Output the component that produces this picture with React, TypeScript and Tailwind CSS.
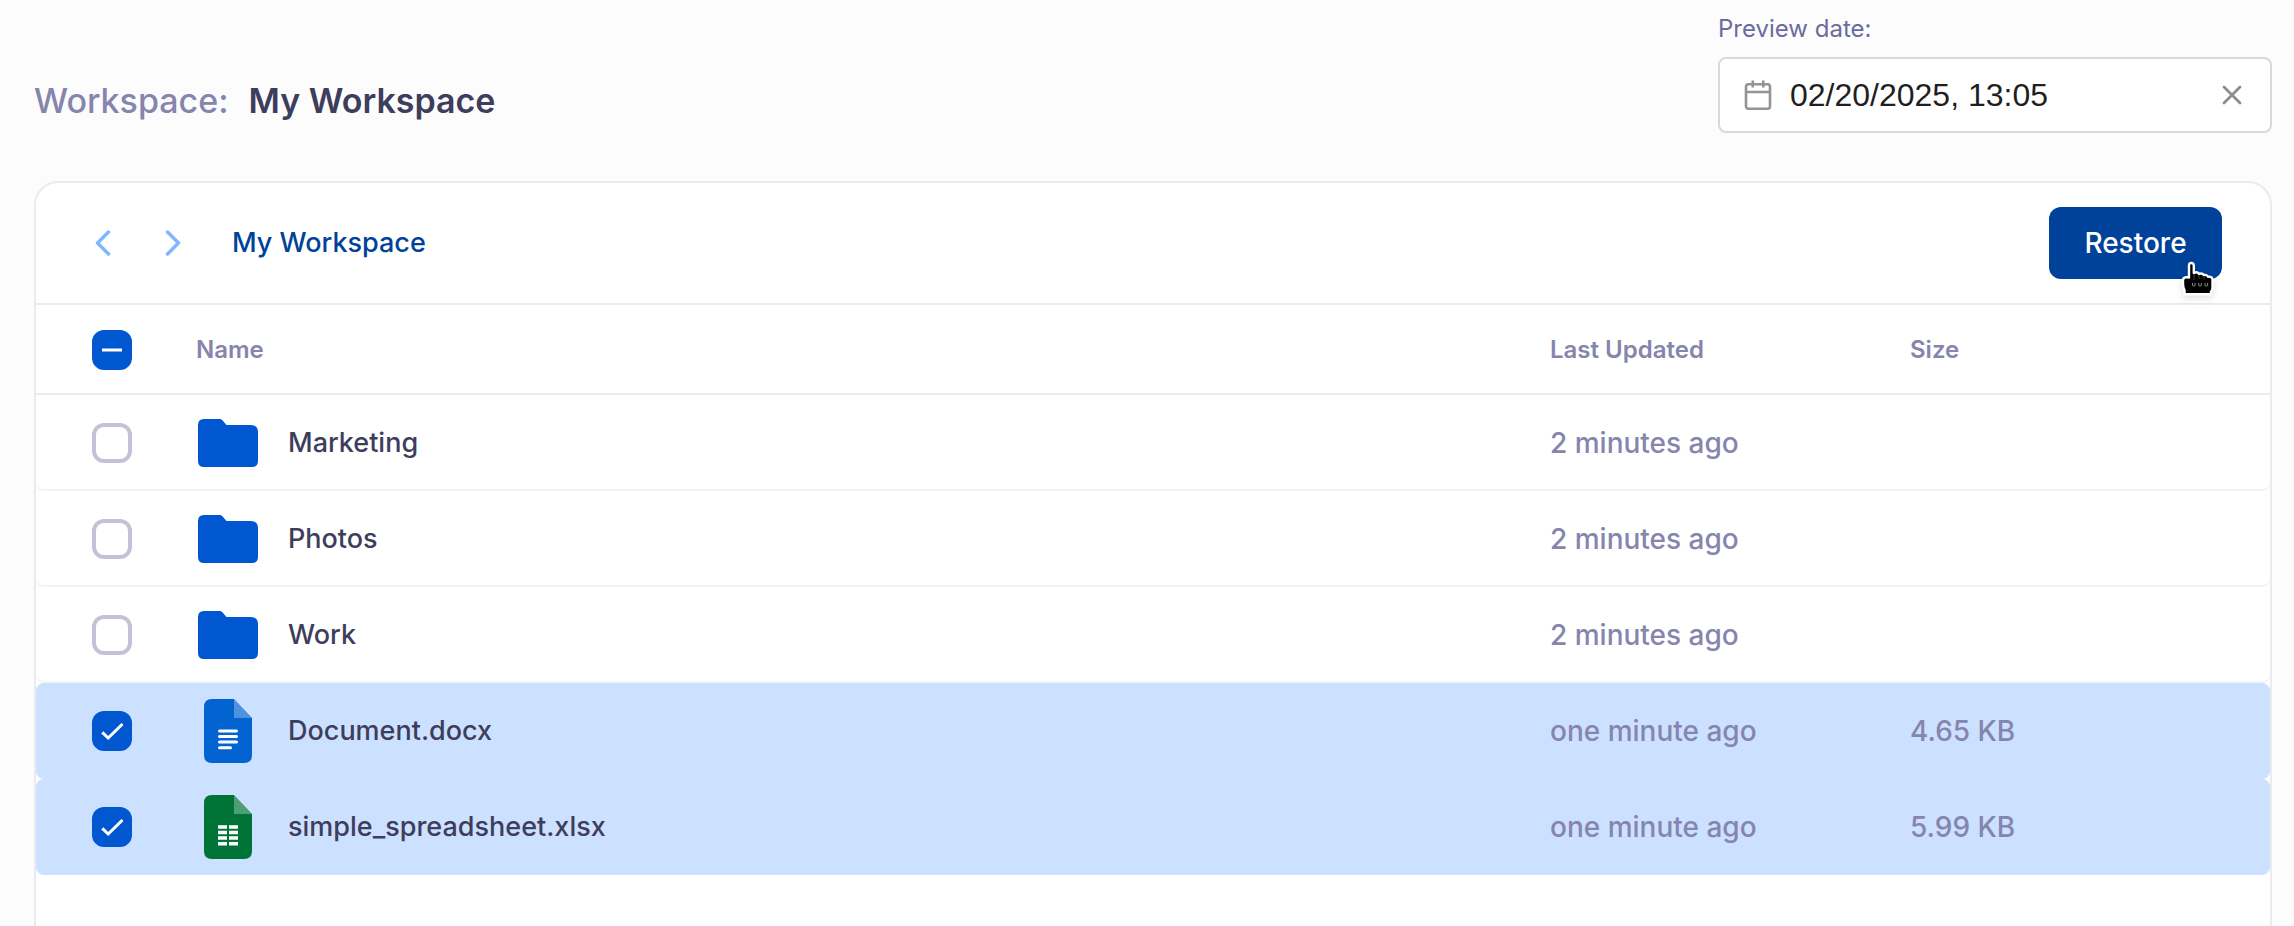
import { useEffect, useRef, useState } from 'react';

type Kind = 'folder' | 'doc' | 'sheet';

interface Entry {
  name: string;
  kind: Kind;
  updated: string;
  size: string;
}

const entries: Entry[] = [
  { name: 'Marketing', kind: 'folder', updated: '2 minutes ago', size: '' },
  { name: 'Photos', kind: 'folder', updated: '2 minutes ago', size: '' },
  { name: 'Work', kind: 'folder', updated: '2 minutes ago', size: '' },
  { name: 'Document.docx', kind: 'doc', updated: 'one minute ago', size: '4.65 KB' },
  { name: 'simple_spreadsheet.xlsx', kind: 'sheet', updated: 'one minute ago', size: '5.99 KB' },
];

function FolderIcon() {
  return (
    <svg viewBox="0 0 64 64" className="size-16 shrink-0" aria-hidden="true">
      <path
        d="M8 8h15c2 0 3 .5 4.300 2.200L30.500 14H55q7 0 7 7v29q0 6-6 6H8q-6 0-6-6V14q0-6 6-6z"
        fill="#0057cf"
      />
    </svg>
  );
}

function FileIcon({ kind }: { kind: 'doc' | 'sheet' }) {
  return (
    <svg viewBox="0 0 64 64" className="size-16 shrink-0" aria-hidden="true">
      <path
        d="M16 0h22l18 19v37q0 8-8 8H16q-8 0-8-8V8q0-8 8-8z"
        fill={kind === 'doc' ? '#0263d1' : '#007437'}
      />
      <path d="M38 0l18 19H38z" fill="#fff" fillOpacity=".3" />
      {kind === 'doc' ? (
        <path
          d="M23.500 32h17M23.500 37.500h17M23.500 43h17M23.500 48.700h11"
          stroke="#fff"
          strokeWidth="3"
          strokeLinecap="round"
        />
      ) : (
        <path
          d="M22 32h9M22 37.500h9M22 43h9M22 48.700h9M33 32h9M33 37.500h9M33 43h9M33 48.700h9"
          stroke="#fff"
          strokeWidth="3.400"
        />
      )}
    </svg>
  );
}

interface CheckboxProps {
  label: string;
  checked: boolean;
  mixed?: boolean;
  onChange: () => void;
}

function Checkbox({ label, checked, mixed = false, onChange }: CheckboxProps) {
  const ref = useRef<HTMLInputElement>(null);
  useEffect(() => {
    if (ref.current) ref.current.indeterminate = mixed;
  }, [mixed]);

  return (
    <div className="grid size-10">
      <input
        ref={ref}
        type="checkbox"
        aria-label={label}
        checked={checked}
        onChange={onChange}
        className="col-start-1 row-start-1 size-10 appearance-none rounded-xl border-4 border-[#c2c2d9] bg-white checked:border-[#0057cf] checked:bg-[#0057cf] indeterminate:border-[#0057cf] indeterminate:bg-[#0057cf]"
      />
      {(checked || mixed) && (
        <svg
          viewBox="0 0 40 40"
          fill="none"
          stroke="#fff"
          strokeWidth="3"
          className="pointer-events-none z-10 col-start-1 row-start-1 size-10"
          aria-hidden="true"
        >
          <path d={mixed ? 'M10 20h20' : 'M10.300 21.300l5.900 5.700L30.500 13'} />
        </svg>
      )}
    </div>
  );
}

function PointerCursor() {
  return (
    <svg
      viewBox="0 0 34 36"
      className="pointer-events-none absolute top-[54px] left-[132px] h-9 w-[34px] drop-shadow-md"
      aria-hidden="true"
    >
      <path
        d="M8 4.500Q8 2 10.300 2T12.800 4.500V12q3.200-2 5.200.800 3.200-1 4.800 1.200 3.200-.600 4.200 1.700 4.500-.500 4.500 3.300V27q0 2-1.500 3.500V33.200H3.500V29Q2 26.500 2 23V18.500Q3 15.500 8 16.500z"
        fill="#000"
        stroke="#fff"
        strokeWidth="2.400"
        strokeLinejoin="round"
      />
      <path d="M13 13v6M18 14v4M23 15.500v3" stroke="#444" strokeWidth="1" />
      <path
        d="M11.500 22v2.500q1.300 1.500 2.600 0V22M17.700 22v2.500q1.300 1.500 2.600 0V22M24 22v2.500q1.300 1.500 2.600 0V22"
        fill="none"
        stroke="#999"
        strokeWidth=".9"
      />
    </svg>
  );
}

export default function App() {
  const [selected, setSelected] = useState<string[]>(['Document.docx', 'simple_spreadsheet.xlsx']);
  const [date, setDate] = useState('02/20/2025, 13:05');

  const toggle = (name: string) =>
    setSelected((s) => (s.includes(name) ? s.filter((n) => n !== name) : [...s, name]));
  const all = selected.length === entries.length;

  return (
    <div className="flex min-h-screen flex-col bg-[#fcfcfc] pr-[22px] pl-[34px] font-['Inter',sans-serif] text-[28px] leading-10 text-[#3d3d5c]">
      <header className="flex items-end justify-between pt-3 pb-12">
        <h1 className="flex gap-5 text-[34px] leading-[64px]">
          <span className="font-medium text-[#8585ad]">Workspace:</span>
          <span className="font-semibold">My Workspace</span>
        </h1>
        <div className="flex w-[554px] flex-col gap-3">
          <label htmlFor="preview-date" className="text-[24px] leading-[33px] text-[#6b6b9e]">
            Preview date:
          </label>
          <div className="flex h-[76px] items-center rounded-lg border-2 border-[#d9d9d9] bg-white px-6">
            <svg
              viewBox="0 0 30 32"
              fill="none"
              stroke="#949494"
              strokeWidth="2.600"
              className="h-8 w-[30px] shrink-0"
              aria-hidden="true"
            >
              <rect x="2" y="5.300" width="24" height="24.400" rx="2.500" />
              <path d="M2 13h24M8.800 1.500v7M19.300 1.500v7" />
            </svg>
            <input
              id="preview-date"
              value={date}
              onChange={(e) => setDate(e.target.value)}
              className="ml-4 min-w-0 flex-1 bg-transparent font-['Liberation_Sans',sans-serif] text-[32px] leading-10 text-[#1f1f1f] outline-none"
            />
            <button type="button" aria-label="Clear date" onClick={() => setDate('')}>
              <svg
                viewBox="0 0 28 28"
                stroke="#8c8c8c"
                strokeWidth="2.800"
                strokeLinecap="round"
                className="size-7"
                aria-hidden="true"
              >
                <path d="M6 6l16 16M22 6L6 22" />
              </svg>
            </button>
          </div>
        </div>
      </header>

      <main className="flex-1 rounded-t-3xl border-2 border-b-0 border-[#eaeaf1] bg-white">
        <div className="flex items-center justify-between border-b-2 border-[#eaeaf1] py-6 pr-12 pl-[50px]">
          <nav className="flex items-center" aria-label="Breadcrumb">
            <button type="button" aria-label="Back">
              <svg viewBox="0 0 34 34" fill="none" stroke="#80b6ff" strokeWidth="3.500" strokeLinecap="round" strokeLinejoin="round" className="size-[34px]">
                <path d="M22.500 6L11.500 17l11 11" />
              </svg>
            </button>
            <button type="button" aria-label="Forward" className="ml-9">
              <svg viewBox="0 0 34 34" fill="none" stroke="#80b6ff" strokeWidth="3.500" strokeLinecap="round" strokeLinejoin="round" className="size-[34px]">
                <path d="M11.500 6l11 11-11 11" />
              </svg>
            </button>
            <a href="#my-workspace" className="ml-[42px] text-[27px] font-medium text-[#004299]">
              My Workspace
            </a>
          </nav>
          <div className="relative">
            <button
              type="button"
              className="h-[72px] w-[173px] rounded-xl bg-[#004299] font-medium text-white"
            >
              Restore
            </button>
            <PointerCursor />
          </div>
        </div>

        <table className="w-full table-fixed border-separate border-spacing-0 text-left">
          <thead>
            <tr className="h-[90px] text-[24px] text-[#8585ad] *:border-b-2 *:border-[#eaeaf1] *:p-0 *:pt-0.5 *:font-semibold">
              <th scope="col" className="w-40">
                <div className="pl-14">
                  <Checkbox
                    label="Select all"
                    checked={all}
                    mixed={selected.length > 0 && !all}
                    onChange={() => setSelected(all ? [] : entries.map((e) => e.name))}
                  />
                </div>
              </th>
              <th scope="col">Name</th>
              <th scope="col" className="w-[360px]">Last Updated</th>
              <th scope="col" className="w-[360px]">Size</th>
            </tr>
          </thead>
          <tbody>
            {entries.map(({ name, kind, updated, size }) => {
              const on = selected.includes(name);
              return (
                <tr
                  key={name}
                  className={
                    on
                      ? 'h-24 *:border-b-2 *:border-[#cce1ff] *:bg-[#cce1ff] *:p-0 *:pt-0.5'
                      : 'h-24 *:border-b-2 *:border-[#f2f2f7] *:p-0 *:pt-0.5'
                  }
                >
                  <td className="rounded-l-lg">
                    <div className="pl-14">
                      <Checkbox label={`Select ${name}`} checked={on} onChange={() => toggle(name)} />
                    </div>
                  </td>
                  <td>
                    <div className="flex items-center gap-7 text-[27px] font-medium">
                      {kind === 'folder' ? <FolderIcon /> : <FileIcon kind={kind} />}
                      {name}
                    </div>
                  </td>
                  <td className="font-medium text-[#8585ad]">{updated}</td>
                  <td className="rounded-r-lg font-medium text-[#8585ad]">{size}</td>
                </tr>
              );
            })}
          </tbody>
        </table>
      </main>
    </div>
  );
}
